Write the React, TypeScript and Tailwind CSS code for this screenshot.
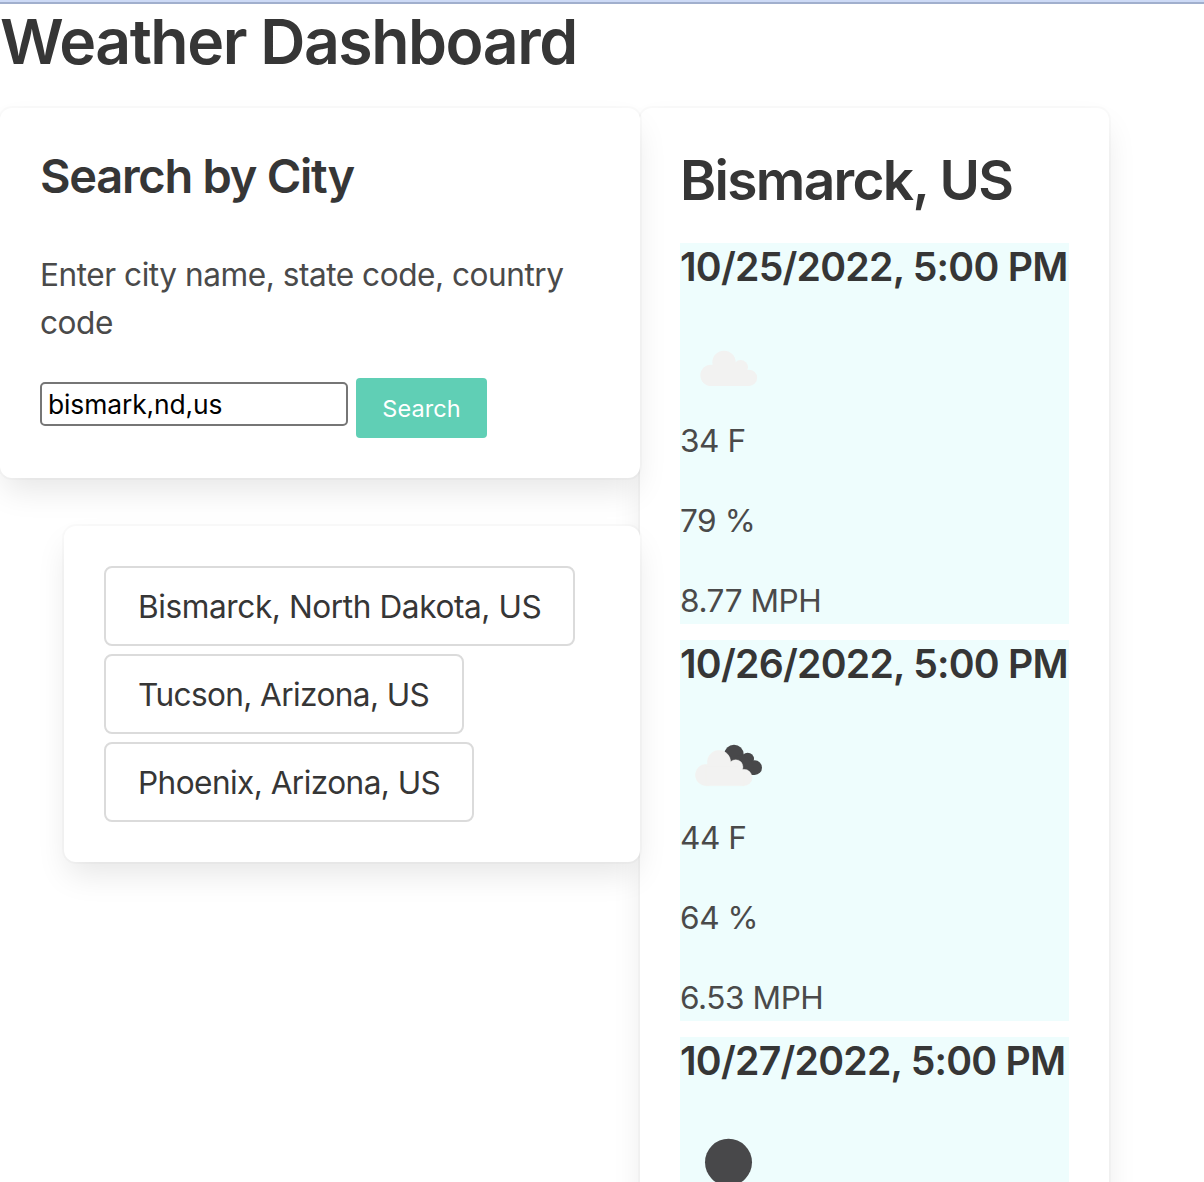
type IconName = "scattered" | "broken" | "clear";

type Day = {
  date: string;
  icon: IconName;
  readings: string[];
};

const CARD =
  "rounded-[12px] bg-white p-10 shadow-[0_16px_32px_-4px_rgba(10,10,10,0.1),0_0_0_2px_rgba(10,10,10,0.02)]";

const cities = [
  { name: "Bismarck, North Dakota, US", style: "w-[471px] tracking-[-0.42px]" },
  { name: "Tucson, Arizona, US", style: "w-[360px] tracking-[-0.62px]" },
  { name: "Phoenix, Arizona, US", style: "w-[370px] tracking-[-0.57px]" },
];

const days: Day[] = [
  { date: "10/25/2022, 5:00 PM", icon: "scattered", readings: ["34 F", "79 %", "8.77 MPH"] },
  { date: "10/26/2022, 5:00 PM", icon: "broken", readings: ["44 F", "64 %", "6.53 MPH"] },
  { date: "10/27/2022, 5:00 PM", icon: "clear", readings: [] },
];

function Cloud() {
  return (
    <>
      <circle cx="92" cy="178" r="32" />
      <circle cx="131" cy="139" r="35" />
      <circle cx="181" cy="154" r="22" />
      <circle cx="206" cy="185.5" r="24.5" />
      <path d="M92 210V150H190L206 170V210Z" />
    </>
  );
}

function WeatherIcon({ name }: { name: IconName }) {
  return (
    <svg viewBox="0 0 300 300" className="block size-[100px] shrink-0">
      {name === "scattered" && (
        <g fill="#f2f2f1" transform="translate(1 0)">
          <Cloud />
        </g>
      )}
      {name === "broken" && (
        <>
          <g fill="#48484a">
            <circle cx="162" cy="124" r="29" />
            <circle cx="203" cy="138" r="19" />
            <circle cx="224" cy="164" r="22" />
            <path d="M150 130L188 126L206 138L218 150L224 186H150Z" />
          </g>
          <g fill="#f2f2f1" stroke="#f2f2f1" strokeWidth="1" transform="translate(-14 8)">
            <Cloud />
          </g>
        </>
      )}
      {name === "clear" && <circle cx="145.5" cy="157" r="70.5" fill="#48484a" />}
    </svg>
  );
}

function DayForecast({ day }: { day: Day }) {
  return (
    <article className="flex h-[381px] w-[389px] flex-col bg-[#eefdfd]">
      <h3 className="h-[73px] shrink-0 text-[39.2px] leading-[48px] font-semibold tracking-[-0.76px] whitespace-nowrap text-[#363636]">
        {day.date}
      </h3>
      <WeatherIcon name={day.icon} />
      <div className="flex flex-col gap-8 pt-px leading-[48px] tracking-[-0.45px]">
        {day.readings.map((reading) => (
          <p key={reading}>{reading}</p>
        ))}
      </div>
    </article>
  );
}

export default function App() {
  return (
    <div className="h-[1182px] overflow-hidden bg-white font-[Inter,sans-serif] text-[31.6px] text-[#4a4a4a]">
      <div className="h-1 border-b-2 border-[#a1afcd] bg-[#cddaf6]" />
      <h1 className="h-[104px] pt-px text-[62.5px] leading-[72px] font-semibold tracking-[-1.47px] text-[#363636]">
        Weather Dashboard
      </h1>
      <main className="flex items-start">
        <div className="relative z-10 flex w-[640px] shrink-0 flex-col gap-12">
          <section className={CARD}>
            <h2 className="h-[102px] pt-px text-[47px] leading-[54px] font-semibold tracking-[-1.27px] text-[#363636]">
              Search by City
            </h2>
            <p className="h-32 pt-px leading-[48px] tracking-[-0.47px]">
              Enter city name, state code, country code
            </p>
            <form className="flex gap-2" onSubmit={(e) => e.preventDefault()}>
              <input
                type="text"
                defaultValue="bismark,nd,us"
                className="mt-1 h-11 w-[308px] rounded-[5px] border-2 border-[#767676] px-[6px] text-[26.4px] leading-none tracking-[-0.1px] text-black outline-none"
              />
              <button
                type="submit"
                className="h-[60px] w-[131px] rounded-[4px] bg-[#60cfb5] pt-[2px] text-[23.5px] tracking-[0.1px] text-white"
              >
                Search
              </button>
            </form>
          </section>
          <section className={`${CARD} ml-16`}>
            <div className="flex flex-col items-start gap-2">
              {cities.map((city) => (
                <button
                  key={city.name}
                  className={`h-20 rounded-[8px] border-2 border-[#dbdbdb] bg-white pt-px pl-8 text-left whitespace-nowrap text-[#363636] ${city.style}`}
                >
                  {city.name}
                </button>
              ))}
            </div>
          </section>
        </div>
        <section className={`${CARD} w-[469px] shrink-0`}>
          <h2 className="h-[95px] pt-px text-[55px] leading-[63px] font-semibold tracking-[-1.68px] whitespace-nowrap text-[#363636]">
            Bismarck, US
          </h2>
          <div className="flex flex-col gap-4">
            {days.map((day) => (
              <DayForecast key={day.date} day={day} />
            ))}
          </div>
        </section>
      </main>
    </div>
  );
}
